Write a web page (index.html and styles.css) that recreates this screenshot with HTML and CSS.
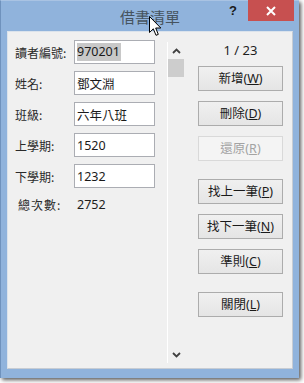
FILE: index.html
```html
<!DOCTYPE html>
<html lang="zh-Hant">
<head>
<meta charset="utf-8">
<title>借書清單</title>
<link rel="stylesheet" href="styles.css">
</head>
<body>
<div class="window">
  <div class="titlebar">
    <div class="tb-side"></div>
    <div class="title">借書清單</div>
    <div class="tb-side controls">
      <span class="help">?</span>
      <span class="close">
        <svg width="10" height="10" viewBox="0 0 10 10"><path d="M1 1 L9 9 M9 1 L1 9" stroke="#fff" stroke-width="2" fill="none"/></svg>
      </span>
    </div>
  </div>
  <div class="client">
    <div class="form">
      <div class="row"><span class="label">讀者編號:</span><span class="box"><span class="sel">970201</span></span></div>
      <div class="row"><span class="label">姓名:</span><span class="box">鄧文淵</span></div>
      <div class="row"><span class="label">班級:</span><span class="box">六年八班</span></div>
      <div class="row"><span class="label">上學期:</span><span class="box">1520</span></div>
      <div class="row"><span class="label">下學期:</span><span class="box">1232</span></div>
      <div class="total"><span class="label total-label">總次數:</span><span class="value">2752</span></div>
    </div>
    <div class="scroll">
      <span class="arrow">
        <svg width="9" height="6" viewBox="0 0 9 6"><path d="M1 5 L4.5 1.5 L8 5" stroke="#404040" stroke-width="1.8" fill="none"/></svg>
      </span>
      <span class="thumb"></span>
      <span class="track"></span>
      <span class="arrow">
        <svg width="9" height="6" viewBox="0 0 9 6"><path d="M1 1 L4.5 4.5 L8 1" stroke="#404040" stroke-width="1.8" fill="none"/></svg>
      </span>
    </div>
    <div class="side">
      <div class="counter">1 / 23</div>
      <div class="group">
        <button class="btn">新增(<u>W</u>)</button>
        <button class="btn">刪除(<u>D</u>)</button>
        <button class="btn" disabled>還原(<u>R</u>)</button>
      </div>
      <div class="group">
        <button class="btn">找上一筆(<u>P</u>)</button>
        <button class="btn">找下一筆(<u>N</u>)</button>
        <button class="btn">準則(<u>C</u>)</button>
      </div>
      <div class="group">
        <button class="btn">關閉(<u>L</u>)</button>
      </div>
    </div>
  </div>
  <svg class="cursor" width="13" height="21" viewBox="0 0 13 21"><path d="M0.5 0.5 L0.5 16.5 L4.3 12.8 L7 19.3 L9.3 18.4 L6.7 12 L11.8 12 Z" fill="#fff" stroke="#000" stroke-width="1" stroke-linejoin="round"/></svg>
</div>
</body>
</html>
```

FILE: styles.css
```css
html, body {
  margin: 0;
  padding: 0;
  background: #ffffff;
}
body {
  width: 304px;
  height: 383px;
  overflow: hidden;
  font-family: "Noto Sans", "Noto Sans CJK TC", sans-serif;
  font-size: 12px;
  color: #1e1e1e;
}
.window {
  position: relative;
  width: 299px;
  height: 378px;
  box-sizing: border-box;
  background: #90b3dc;
  border-left: 1px solid #6f92bd;
  border-top: 1px solid #a9c3e3;
  box-shadow: 2px 2px 4px rgba(0, 0, 0, 0.65);
  display: flex;
  flex-direction: column;
}
.titlebar {
  height: 30px;
  display: grid;
  grid-template-columns: 1fr auto 1fr;
  align-items: start;
}
.title {
  font-family: "Noto Sans CJK TC", sans-serif;
  font-size: 15px;
  line-height: 20px;
  padding-top: 6px;
  color: #46535f;
}
.controls {
  display: flex;
  justify-content: flex-end;
  align-items: flex-start;
  margin-top: -1px;
  padding-right: 5px;
}
.help {
  width: 22px;
  padding-right: 4px;
  height: 21px;
  display: flex;
  align-items: center;
  justify-content: center;
  font-family: "Liberation Sans", sans-serif;
  font-weight: bold;
  font-size: 13px;
  color: #1a1a1a;
}
.close {
  width: 46px;
  height: 21px;
  background: #c75050;
  display: flex;
  align-items: center;
  justify-content: center;
}
.client {
  margin: 0 6px 0 6px;
  height: 338px;
  box-sizing: border-box;
  background: #f0f0f0;
  border: 1px solid #dbe3ec;
  border-right-color: #c7ccd3;
  border-bottom-color: #c7ccd3;
  display: flex;
}
.form {
  width: 159px;
  padding: 8px 0 0 7px;
  box-sizing: border-box;
  display: flex;
  flex-direction: column;
  gap: 7px;
}
.row {
  display: flex;
  align-items: center;
  height: 24px;
}
.label {
  width: 59px;
  flex: none;
  font-family: "Noto Sans CJK TC", sans-serif;
  font-size: 12px;
  color: #2a2a2a;
}
.box {
  width: 81px;
  height: 24px;
  box-sizing: border-box;
  border: 1px solid #abadb3;
  background: #ffffff;
  padding-left: 2px;
  display: flex;
  align-items: center;
  font-size: 12.5px;
  color: #1a1a1a;
}
.sel {
  background: #c8c8c8;
  padding: 1px 1px 1px 0;
  line-height: 16px;
}
.total {
  display: flex;
  align-items: center;
  height: 16px;
  margin-top: 1px;
  padding-left: 3px;
}
.total-label {
  width: 56px;
  letter-spacing: 1px;
}
.value {
  padding-left: 3px;
  font-size: 12.5px;
}
.scroll {
  width: 17px;
  box-sizing: border-box;
  border-left: 1px solid #ffffff;
  margin: 10px 0 5px 0;
  display: flex;
  flex-direction: column;
  align-items: center;
}
.arrow {
  height: 17px;
  width: 16px;
  display: flex;
  align-items: center;
  justify-content: center;
}
.thumb {
  width: 16px;
  height: 18px;
  background: #cdcdcd;
}
.track {
  flex: 1;
}
.side {
  flex: 1;
  padding: 10px 0 0 14px;
  display: flex;
  flex-direction: column;
}
.counter {
  width: 85px;
  text-align: center;
  height: 16px;
  line-height: 16px;
  margin-bottom: 8px;
  font-size: 13px;
}
.group {
  display: flex;
  flex-direction: column;
  gap: 10px;
  margin-bottom: 18px;
}
.btn {
  width: 85px;
  height: 25px;
  box-sizing: border-box;
  border: 1px solid #acacac;
  background: linear-gradient(#f0f0f0, #e5e5e5);
  font-family: "Noto Sans", "Noto Sans CJK TC", sans-serif;
  font-size: 12.5px;
  color: #1a1a1a;
  padding: 0;
  margin: 0;
  line-height: 23px;
}
.btn:disabled {
  border-color: #d9d9d9;
  background: #f4f4f4;
  color: #a3a3a3;
}
.cursor {
  position: absolute;
  left: 148px;
  top: 15px;
}
```
